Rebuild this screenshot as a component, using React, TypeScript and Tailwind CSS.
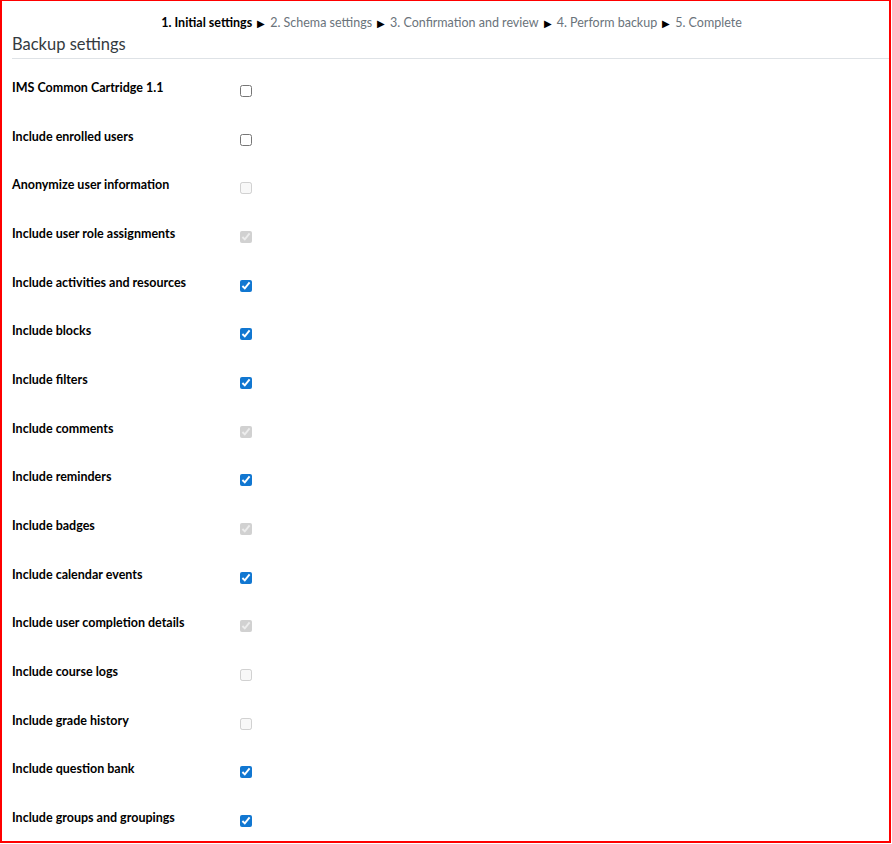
import React from 'react';

type Setting = {
  label: string;
  checked: boolean;
  disabled?: boolean;
};

const steps = [
  '1. Initial settings',
  '2. Schema settings',
  '3. Confirmation and review',
  '4. Perform backup',
  '5. Complete',
];

const settings: Setting[] = [
  { label: 'IMS Common Cartridge 1.1', checked: false },
  { label: 'Include enrolled users', checked: false },
  { label: 'Anonymize user information', checked: false, disabled: true },
  { label: 'Include user role assignments', checked: true, disabled: true },
  { label: 'Include activities and resources', checked: true },
  { label: 'Include blocks', checked: true },
  { label: 'Include filters', checked: true },
  { label: 'Include comments', checked: true, disabled: true },
  { label: 'Include reminders', checked: true },
  { label: 'Include badges', checked: true, disabled: true },
  { label: 'Include calendar events', checked: true },
  { label: 'Include user completion details', checked: true, disabled: true },
  { label: 'Include course logs', checked: false, disabled: true },
  { label: 'Include grade history', checked: false, disabled: true },
  { label: 'Include question bank', checked: true },
  { label: 'Include groups and groupings', checked: true },
];

const SettingRow: React.FC<{ setting: Setting }> = ({ setting }) => (
  <div className="flex h-[48.67px] items-start">
    <label className="w-[228px] text-[12.5px] font-bold leading-[16px] text-black">
      {setting.label}
    </label>
    <input
      type="checkbox"
      className="mt-[5px] h-[12px] w-[12px] accent-[#1177d1]"
      defaultChecked={setting.checked}
      disabled={setting.disabled}
    />
  </div>
);

export default function App() {
  return (
    <div
      className="h-[843px] w-[891px] overflow-hidden border-2 border-t border-[#ff0000] bg-white"
      style={{ fontFamily: 'Lato, "Open Sans", sans-serif' }}
    >
      {/* wizard progress */}
      <div className="mt-[13px] flex items-center justify-center pl-[12px] text-[12.5px] leading-[18px]">
        {steps.map((step, i) => (
          <React.Fragment key={step}>
            {i > 0 && <span className="px-[5px] text-[10px] text-black">▶</span>}
            <span className={i === 0 ? 'font-bold text-black' : 'text-[#6a737b]'}>{step}</span>
          </React.Fragment>
        ))}
      </div>

      <div className="pl-[10px]">
        <h2 className="border-b border-[#dee2e6] pt-[1px] pb-[3px] text-[16.5px] leading-[22px] text-[#343a40]">
          Backup settings
        </h2>

        <div className="pt-[21px]">
          {settings.map((s) => (
            <SettingRow key={s.label} setting={s} />
          ))}
        </div>
      </div>
    </div>
  );
}
